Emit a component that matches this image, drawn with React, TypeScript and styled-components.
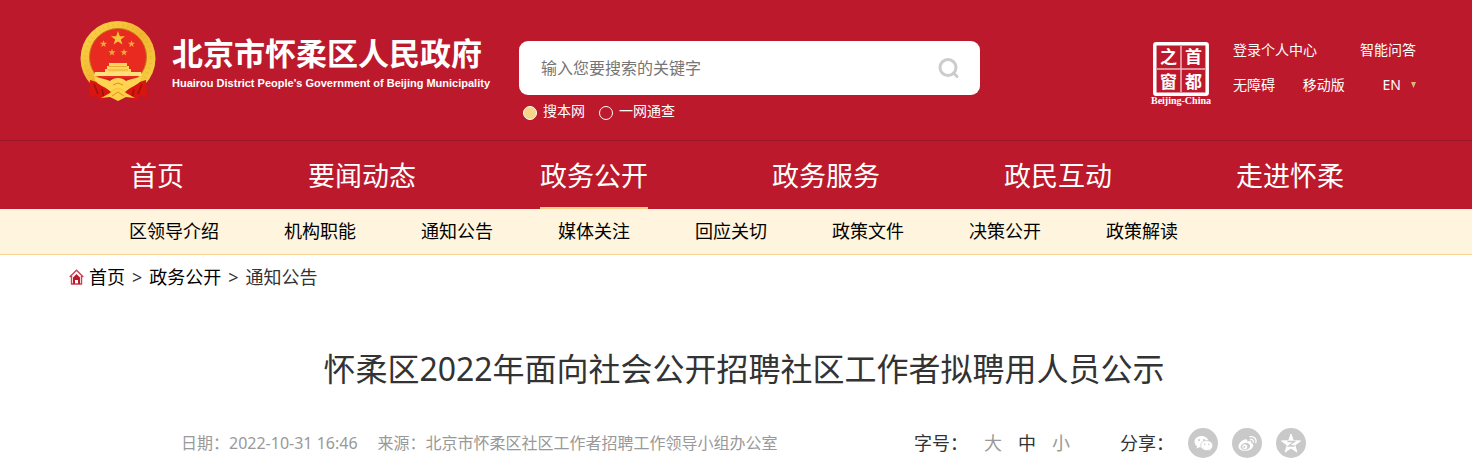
import React from "react";
import styled, { createGlobalStyle } from "styled-components";

const red = "#bc1a2c";
const sans = `"Noto Sans", "Noto Sans CJK SC", sans-serif`;

const GlobalStyle = createGlobalStyle`
  *, *::before, *::after { box-sizing: border-box; }
  body { margin: 0; background: #fff; color: #333; font-family: ${sans}; }
  h1, p, ul, ol { margin: 0; padding: 0; }
  ul, ol { list-style: none; }
  a { color: inherit; text-decoration: none; }
  button, input { font: inherit; color: inherit; }
  button { padding: 0; border: 0; background: none; cursor: pointer; }
  svg { display: block; flex: none; }
`;

const Header = styled.header`
  display: flex;
  align-items: flex-start;
  min-height: 140px;
  padding: 20px 56px 0 80px;
  background: ${red};
  color: #fff;
`;

const Brand = styled.a`
  display: flex;
  gap: 16px;
  white-space: nowrap;
`;

const BrandText = styled.span`
  display: flex;
  flex-direction: column;
  padding-top: 11px;
`;

const BrandName = styled.span`
  font: bold 31px/42px "Noto Sans CJK SC", sans-serif;
`;

const BrandLatin = styled.span`
  font: bold 11px/20px "Liberation Sans", sans-serif;
`;

const SearchForm = styled.form`
  flex: 0 1 461px;
  min-width: 240px;
  margin: 21px 32px 0 29px;
`;

const SearchBox = styled.div`
  display: flex;
  align-items: center;
  height: 54px;
  padding: 0 20px 0 22px;
  border-radius: 9px;
  background: #fff;
`;

const SearchInput = styled.input`
  flex: 1;
  min-width: 0;
  padding: 0;
  border: 0;
  outline: 0;
  background: none;
  color: #333;
  font-size: 16px;
  line-height: 24px;
  &::placeholder { color: #757575; opacity: 1; }
`;

const Scopes = styled.div`
  display: flex;
  gap: 14px;
  padding: 6px 4px 0;
`;

const ScopeLabel = styled.label`
  display: flex;
  align-items: center;
  gap: 6px;
  font-size: 14px;
  line-height: 20px;
  white-space: nowrap;
`;

const ScopeRadio = styled.input`
  appearance: none;
  width: 14px;
  height: 14px;
  margin: 4px 0 0;
  border: 1px solid #fff;
  border-radius: 50%;
  &:checked { background: #f6d488; }
`;

const Seal = styled.a`
  display: flex;
  flex-direction: column;
  align-items: center;
  margin: 22px 22px 0 auto;
`;

const SealCaption = styled.span`
  font: bold 10px/10px "Liberation Serif", serif;
`;

const Tools = styled.div`
  display: flex;
  flex-direction: column;
  gap: 15px;
  width: 183px;
  padding-top: 20px;
`;

const ToolRow = styled.div`
  display: flex;
  align-items: center;
  justify-content: space-between;
  font-size: 14px;
  line-height: 20px;
  white-space: nowrap;
`;

const Language = styled.button`
  display: flex;
  align-items: center;
  gap: 10px;
  margin-left: 10px;
`;

const MainNav = styled.nav`
  border-top: 1px solid #9c1625;
  background: ${red};
`;

const MainList = styled.ul`
  display: flex;
  justify-content: space-between;
  padding: 0 128px 0 130px;
`;

const MainLink = styled.a<{ $active?: boolean }>`
  display: block;
  height: 68px;
  border-bottom: 2px solid ${(p) => (p.$active ? "#f8cf84" : "transparent")};
  color: #fff;
  font-size: 27px;
  line-height: 70px;
  white-space: nowrap;
`;

const SubNav = styled.nav`
  border-bottom: 1px solid #f8d494;
  background: #fff4de;
`;

const SubList = styled.ul`
  display: flex;
  gap: 0 65px;
  padding: 0 129px;
  color: #000;
  font-size: 18px;
  line-height: 45px;
  white-space: nowrap;
`;

const Crumbs = styled.nav`
  display: flex;
  align-items: center;
  gap: 7px;
  padding: 7px 69px 0;
  font-size: 18px;
  line-height: 30px;
`;

const CrumbLink = styled.a`
  display: flex;
  align-items: center;
  gap: 5px;
  color: #000;
`;

const Title = styled.h1`
  padding: 53px 32px 0 48px;
  font-size: 32px;
  font-weight: 400;
  line-height: 48px;
  text-align: center;
`;

const Meta = styled.div`
  display: flex;
  align-items: center;
  justify-content: space-between;
  padding: 34px 166px 12px 181px;
`;

const Origin = styled.p`
  display: flex;
  gap: 20px;
  color: #999;
  font-size: 16px;
  line-height: 32px;
`;

const Actions = styled.div`
  display: flex;
  align-items: center;
  gap: 50px;
  font-size: 18px;
  line-height: 32px;
`;

const ActionGroup = styled.div<{ $gap: number }>`
  display: flex;
  align-items: center;
  gap: ${(p) => p.$gap}px;
`;

const SizeButton = styled.button<{ $active?: boolean }>`
  color: ${(p) => (p.$active ? "#333" : "#999")};
`;

const ShareButton = styled.button`
  width: 30px;
  height: 30px;
  border-radius: 50%;
  background: #c9c9c9;
`;

const starPath = "M0-10 2.4-3.2 9.5-3.1 3.8 1.2 5.9 8.1 0 4-5.9 8.1-3.8 1.2-9.5-3.1-2.4-3.2Z";

function Emblem() {
  return (
    <svg width="76" height="82" viewBox="0 0 76 82" aria-hidden="true">
      <defs>
        <linearGradient id="gold" x1="0" y1="0" x2="1" y2="1">
          <stop offset="0" stopColor="#ffd94e" />
          <stop offset=".5" stopColor="#f0b52e" />
          <stop offset="1" stopColor="#fbd54a" />
        </linearGradient>
      </defs>
      <circle cx="38" cy="38.500" r="37.500" fill="url(#gold)" />
      <circle cx="38" cy="38" r="33" fill="none" stroke="#d99a1c" strokeWidth="3" strokeDasharray="1 4" opacity=".3" />
      <circle cx="38" cy="37" r="28.500" fill="#e92a20" stroke="#c7781c" />
      <path transform="translate(38 18.500) scale(.74)" fill="#f5c43c" d={starPath} />
      <g fill="#f0a83a">
        <path transform="translate(23.500 24) scale(.38)" d={starPath} />
        <path transform="translate(51.500 24) scale(.38)" d={starPath} />
        <path transform="translate(32 32.500) scale(.38)" d={starPath} />
        <path transform="translate(44 32.500) scale(.38)" d={starPath} />
      </g>
      <path d="M29 43h18v3h2v3h2v4h-3v2H28v-2h-3v-4h2v-3h2Z" fill="#ffd65a" />
      <path d="M29 46.500h18M28 50h20" stroke="#f0a63a" />
      <path d="M15 52h46l1 4H14Z" fill="#ffe07a" />
      <path d="M14 58h48l-3 3H17Z" fill="#d02019" />
      <path d="M10 60c5 1 9 3 12 6l9 5h14l9-5c3-3 7-5 12-6l1 18-7-3-5 6-7-4H28l-7 4-5-6-7 3Z" fill="#d9150f" />
      <path d="m14 64 4 10m44-10-4 10m-36-5 2 9m30-9-2 9" fill="none" stroke="#98120f" strokeWidth="1.500" />
      <path
        d="M14 57c7 1 12 2 16 4 2-2 5-3 8-3s6 1 8 3c4-2 9-3 16-4-1 5-5 8-11 10l-6 5c-2-3-4-4-7-4s-5 1-7 4l-6-5c-6-2-10-5-11-10Z"
        fill="#ffd453"
      />
      <path d="m33 65 5-2 5 2" fill="none" stroke="#d9901f" />
      <path d="m21 78 9-5c2-3 5-4 8-4s6 1 8 4l9 5-9-1-8 4-8-4Z" fill="#ffcf45" />
      <path d="m32 76 6-4 6 4" fill="none" stroke="#dd9422" />
    </svg>
  );
}

function SealMark() {
  return (
    <svg width="56" height="54" viewBox="0 0 56 54" aria-hidden="true">
      <rect x="1.800" y="1.800" width="52.400" height="50.400" rx="1.500" fill="none" stroke="#fff" strokeWidth="3.500" />
      <path d="M28 4v46M4 27h48" stroke="#eeb6bd" strokeWidth="1.500" />
      <g fill="#fff" fontFamily="'Noto Sans CJK SC', sans-serif" fontWeight="bold" fontSize="17" textAnchor="middle">
        <text x="15.500" y="21">之</text>
        <text x="40.500" y="21">首</text>
        <text x="15.500" y="46">窗</text>
        <text x="40.500" y="46">都</text>
      </g>
    </svg>
  );
}

function SearchIcon() {
  return (
    <svg width="22" height="22" viewBox="0 0 22 22" fill="none" stroke="#ccc" strokeWidth="3" aria-hidden="true">
      <circle cx="10" cy="10.500" r="8" />
      <path d="m15.500 16 3.500 3.500" strokeLinecap="round" />
    </svg>
  );
}

function HomeIcon() {
  return (
    <svg width="15" height="16" viewBox="0 0 15 16" aria-hidden="true">
      <path d="M.7 8 7.500 1.200 14.300 8M2.500 7v8h10V7" fill="none" stroke="#cc4052" strokeWidth="1.400" />
      <path d="M4 8.500 7.500 5 11 8.500V15H9v-4H6v4H4Z" fill={red} />
    </svg>
  );
}

function WechatIcon() {
  return (
    <svg width="30" height="30" viewBox="0 0 30 30" aria-hidden="true">
      <path d="M13.500 8c-4 0-7 2.500-7 5.700 0 1.900 1 3.500 2.600 4.500L8.500 20.500l2.700-1.300c.8.200 1.500.3 2.300.3 4 0 7-2.600 7-5.800S17.500 8 13.500 8Z" fill="#fff" />
      <path d="M18.700 12.500c-3.300 0-6 2.200-6 5s2.700 5 6 5c.7 0 1.400-.1 2-.3l2.300 1.200-.5-2c1.400-.9 2.200-2.300 2.200-3.900 0-2.800-2.700-5-6-5Z" fill="#fff" stroke="#c9c9c9" strokeWidth=".8" />
      <g fill="#c9c9c9"><circle cx="11" cy="12" r="1" /><circle cx="16" cy="12" r="1" /><circle cx="16.800" cy="16.300" r=".8" /><circle cx="20.800" cy="16.300" r=".8" /></g>
    </svg>
  );
}

function WeiboIcon() {
  return (
    <svg width="30" height="30" viewBox="0 0 30 30" aria-hidden="true">
      <path d="M12.500 11.500c2-.7 3.300.1 2.700 2 2.500-1 4.500-.6 4 1.500 3 .9 2.500 4 0 5.900-3.200 2.500-9 2.500-11.400.4-3.400-2.900.2-8.200 4.700-9.800Z" fill="#fff" />
      <ellipse cx="13.400" cy="18.400" rx="4.700" ry="3.500" transform="rotate(-12 13.400 18.400)" fill="#c9c9c9" />
      <circle cx="12.800" cy="18.700" r="2.500" fill="#fff" />
      <circle cx="12.300" cy="19" r=".9" fill="#c9c9c9" />
      <path d="M18 8.700c4-.8 7 2.300 5.800 6M18.500 11.500c1.900-.4 3.200 1 2.700 2.700" fill="none" stroke="#fff" strokeWidth="1.300" strokeLinecap="round" />
    </svg>
  );
}

function QzoneIcon() {
  return (
    <svg width="30" height="30" viewBox="0 0 30 30" aria-hidden="true">
      <path d={starPath} transform="translate(15 16)" fill="#fff" stroke="#fff" strokeLinejoin="round" />
      <path d="M11.500 13.500h7L12.500 18h6" fill="none" stroke="#c9c9c9" strokeWidth="1.300" />
    </svg>
  );
}

const mainItems = ["首页", "要闻动态", "政务公开", "政务服务", "政民互动", "走进怀柔"];
const subItems = ["区领导介绍", "机构职能", "通知公告", "媒体关注", "回应关切", "政策文件", "决策公开", "政策解读"];
const shares = [
  { label: "微信", Icon: WechatIcon },
  { label: "微博", Icon: WeiboIcon },
  { label: "QQ空间", Icon: QzoneIcon },
];

export default function App() {
  return (
    <>
      <GlobalStyle />
      <Header>
        <Brand href="#">
          <Emblem />
          <BrandText>
            <BrandName>北京市怀柔区人民政府</BrandName>
            <BrandLatin>Huairou District People's Government of Beijing Municipality</BrandLatin>
          </BrandText>
        </Brand>
        <SearchForm onSubmit={(e) => e.preventDefault()}>
          <SearchBox>
            <SearchInput type="text" aria-label="搜索" placeholder="输入您要搜索的关键字" />
            <button type="submit" aria-label="搜索">
              <SearchIcon />
            </button>
          </SearchBox>
          <Scopes>
            <ScopeLabel>
              <ScopeRadio type="radio" name="scope" defaultChecked />
              搜本网
            </ScopeLabel>
            <ScopeLabel>
              <ScopeRadio type="radio" name="scope" />
              一网通查
            </ScopeLabel>
          </Scopes>
        </SearchForm>
        <Seal href="#">
          <SealMark />
          <SealCaption>Beijing-China</SealCaption>
        </Seal>
        <Tools>
          <ToolRow>
            <a href="#">登录个人中心</a>
            <a href="#">智能问答</a>
          </ToolRow>
          <ToolRow>
            <a href="#">无障碍</a>
            <a href="#">移动版</a>
            <Language type="button">
              EN
              <svg width="5" height="6" viewBox="0 0 5 6" aria-hidden="true">
                <path d="M0 0h5L2.500 6Z" fill="#dcb877" />
              </svg>
            </Language>
          </ToolRow>
        </Tools>
      </Header>
      <MainNav>
        <MainList>
          {mainItems.map((item) => (
            <li key={item}>
              <MainLink href="#" $active={item === "政务公开"}>{item}</MainLink>
            </li>
          ))}
        </MainList>
      </MainNav>
      <SubNav>
        <SubList>
          {subItems.map((item) => (
            <li key={item}>
              <a href="#">{item}</a>
            </li>
          ))}
        </SubList>
      </SubNav>
      <Crumbs>
        <CrumbLink href="#">
          <HomeIcon />
          首页
        </CrumbLink>
        <span>&gt;</span>
        <CrumbLink href="#">政务公开</CrumbLink>
        <span>&gt;</span>
        <span>通知公告</span>
      </Crumbs>
      <main>
        <Title>怀柔区2022年面向社会公开招聘社区工作者拟聘用人员公示</Title>
        <Meta>
          <Origin>
            <span>日期：2022-10-31 16:46</span>
            <span>来源：北京市怀柔区社区工作者招聘工作领导小组办公室</span>
          </Origin>
          <Actions>
            <ActionGroup $gap={16}>
              <span>字号：</span>
              <SizeButton type="button">大</SizeButton>
              <SizeButton type="button" $active>中</SizeButton>
              <SizeButton type="button">小</SizeButton>
            </ActionGroup>
            <ActionGroup $gap={14}>
              <span>分享：</span>
              {shares.map(({ label, Icon }) => (
                <ShareButton key={label} type="button" aria-label={label}>
                  <Icon />
                </ShareButton>
              ))}
            </ActionGroup>
          </Actions>
        </Meta>
      </main>
    </>
  );
}
